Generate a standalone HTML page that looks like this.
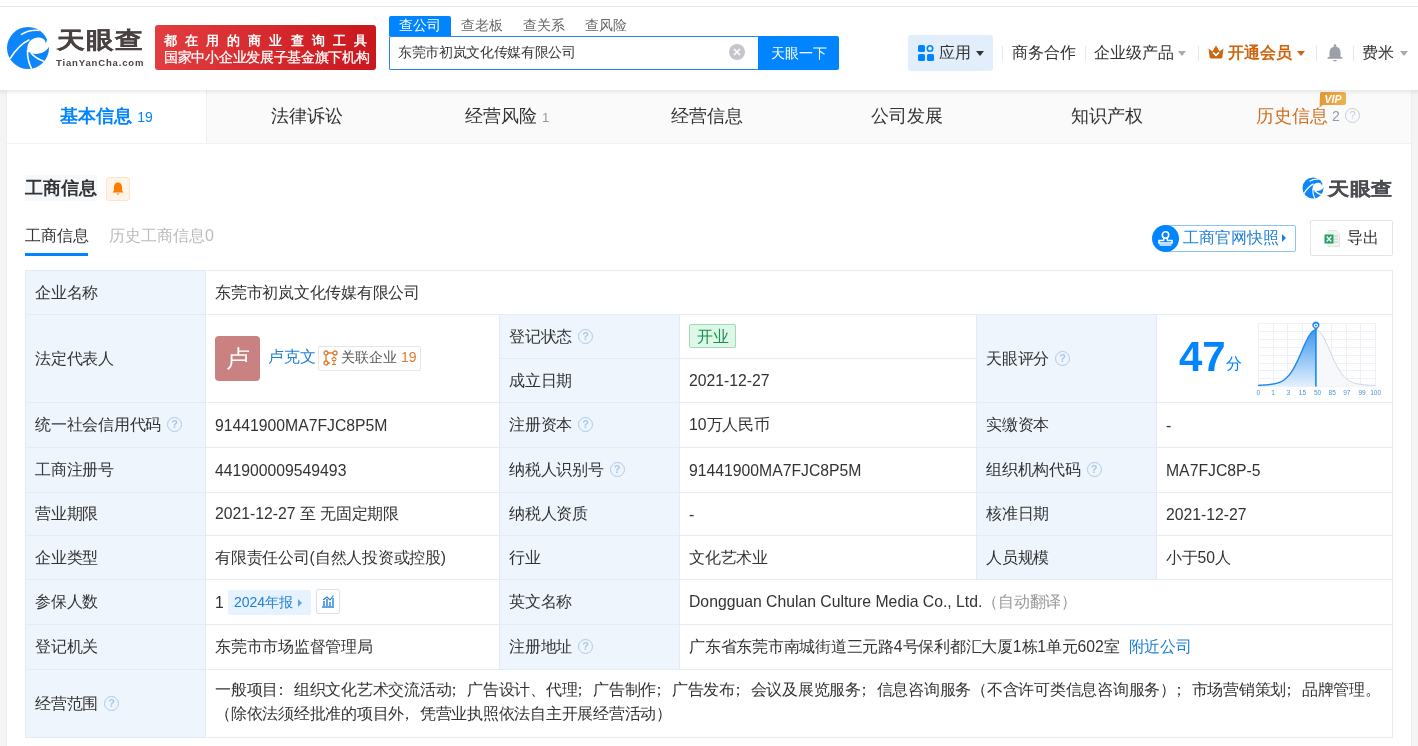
<!DOCTYPE html>
<html><head><meta charset="utf-8">
<style>
*{box-sizing:border-box;margin:0;padding:0}
html,body{width:1418px;height:746px;overflow:hidden}
body{position:relative;background:#f4f4f4;font-family:"Liberation Sans",sans-serif;color:#333}
.a{position:absolute;white-space:nowrap}
#hdr{position:absolute;left:0;top:0;width:1418px;height:90px;background:#fff}
#topline{position:absolute;left:0;top:6px;width:1418px;height:1px;background:#e6e6e6}
#shadow{position:absolute;left:0;top:90px;width:1418px;height:5px;background:linear-gradient(rgba(0,0,0,0.07),rgba(0,0,0,0))}
#tabbar{position:absolute;left:7px;top:90px;width:1404px;height:54px;background:#fafafa;border-bottom:1px solid #f2f2f2}
.tab{position:absolute;top:0;height:53px;width:200px;text-align:center;font-size:18px;line-height:53px;color:#333}
#content{position:absolute;left:7px;top:144px;width:1404px;height:602px;background:#fff}
table.t{position:absolute;left:25px;top:270px;border-collapse:collapse;table-layout:fixed;width:1367px}
table.t td{border:1px solid #e4ebf2;font-size:15.75px;color:#333;padding:1px 0 0 9px;vertical-align:middle;white-space:nowrap}
.c{letter-spacing:-0.25px}
table.t td.l{background:#eef5fd}
.q{display:inline-block;width:15px;height:15px;border:1.6px solid #aecbe8;border-radius:50%;font-size:11px;line-height:12px;text-align:center;color:#a9c8e6;vertical-align:2px;margin-left:6px;font-weight:bold}
.sep{position:absolute;top:46px;width:1px;height:15px;background:#e6e6e6}
.caret{position:absolute;width:0;height:0;border-left:4px solid transparent;border-right:4px solid transparent;border-top:5px solid #999}
</style></head>
<body><div style="position:absolute;left:0;top:0;width:1418px;height:746px;will-change:transform;background:transparent">
<div id="hdr">
  <div id="topline"></div>
  <svg class="a" style="left:4px;top:24px" width="48" height="48" viewBox="0 0 48 48">
    <circle cx="24" cy="24" r="21" fill="#0d85fb"/>
    <path d="M23.8 27.7 C21.9 21.2 25.7 14.2 33.5 13.5 C38.6 13.2 41.8 16.1 41.5 19.3 C42.5 18 43 16.1 43.1 14.5 L48.9 14.5 L48.9 23.2 L45 22.8 C42.5 27.7 36 30.9 28.3 29.6 Z" fill="#fff"/>
    <path d="M17 10.6 C22.5 7.1 29 5.8 35.4 6.4" stroke="#fff" stroke-width="1.5" fill="none"/>
    <path d="M6.1 34.7 C11.6 25.7 18 19.3 25.4 15.8" stroke="#fff" stroke-width="1.6" fill="none"/>
    <path d="M23.5 25.7 C23.2 33.5 25.1 39.9 27.7 45" stroke="#fff" stroke-width="1.6" fill="none"/>
    <path d="M27 29 C30.9 33.5 36 36 39.9 37.3" stroke="#fff" stroke-width="1.6" fill="none"/>
  </svg>
  <div class="a" id="logotxt" style="left:57px;top:26px;font-size:28px;line-height:34px;font-weight:bold;color:#4a4242;letter-spacing:1px;-webkit-text-stroke:0.3px #4a4242;transform:scaleY(0.83);transform-origin:0 0">天眼查</div>
  <div class="a" style="left:56px;top:57px;font-size:9.5px;line-height:12px;font-weight:bold;color:#4a4242;letter-spacing:0.85px">TianYanCha.com</div>
  <div class="a" style="left:155px;top:25px;width:221px;height:45px;border-radius:3px;background:linear-gradient(90deg,#e23d40,#c9171c)"></div>
  <div class="a" style="left:164px;top:32px;font-size:13px;line-height:17px;color:#fff;letter-spacing:8.1px;font-weight:bold">都在用的商业查询工具</div>
  <div class="a" style="left:164px;top:49px;font-size:13.5px;line-height:17px;color:#fff;letter-spacing:-0.3px;-webkit-text-stroke:0.25px #fff">国家中小企业发展子基金旗下机构</div>

  <div class="a" style="left:389px;top:16px;width:62px;height:20px;background:#0084ff;border-radius:2px 2px 0 0"></div>
  <div class="a" style="left:389px;top:15px;width:62px;font-size:14px;line-height:20px;color:#fff;text-align:center">查公司</div>
  <div class="a" style="left:461px;top:15px;font-size:14px;line-height:20px;color:#666">查老板</div>
  <div class="a" style="left:523px;top:15px;font-size:14px;line-height:20px;color:#666">查关系</div>
  <div class="a" style="left:585px;top:15px;font-size:14px;line-height:20px;color:#666">查风险</div>
  <div class="a" style="left:389px;top:36px;width:370px;height:34px;border:1px solid #2b86e3;border-right:none;border-radius:2px 0 0 2px;background:#fff"></div>
  <div class="a" style="left:398px;top:36px;font-size:13.5px;line-height:34px;color:#333;letter-spacing:-0.35px">东莞市初岚文化传媒有限公司</div>
  <div class="a" style="left:729px;top:44px;width:16px;height:16px;border-radius:50%;background:#c4c6cc"></div>
  <svg class="a" style="left:729px;top:44px" width="16" height="16" viewBox="0 0 16 16"><path d="M5 5L11 11M11 5L5 11" stroke="#fff" stroke-width="1.6"/></svg>
  <div class="a" style="left:758px;top:36px;width:81px;height:34px;background:#0084ff;border-radius:0 2px 2px 0;font-size:14px;line-height:34px;color:#fff;text-align:center">天眼一下</div>

  <div class="a" style="left:908px;top:35px;width:85px;height:36px;background:#e2eefb;border-radius:3px"></div>
  <svg class="a" style="left:918px;top:45px" width="16" height="16" viewBox="0 0 16 16"><rect x="0" y="0" width="7" height="7" rx="1.5" fill="#0084ff"/><circle cx="12" cy="3.5" r="2.7" fill="none" stroke="#0084ff" stroke-width="1.6"/><rect x="0" y="9" width="7" height="7" rx="1.5" fill="#0084ff"/><rect x="9" y="9" width="7" height="7" rx="1.5" fill="#0084ff"/></svg>
  <div class="a" style="left:939px;top:43px;font-size:16px;line-height:20px;color:#333">应用</div>
  <div class="caret" style="left:976px;top:51px;border-top-color:#333"></div>
  <div class="sep" style="left:1002px"></div>
  <div class="a" style="left:1012px;top:43px;font-size:16px;line-height:20px;color:#333">商务合作</div>
  <div class="sep" style="left:1085px"></div>
  <div class="a" style="left:1094px;top:43px;font-size:16px;line-height:20px;color:#333">企业级产品</div>
  <div class="caret" style="left:1178px;top:51px;border-top-color:#aaa"></div>
  <div class="sep" style="left:1198px"></div>
  <svg class="a" style="left:1208px;top:45px" width="16" height="14" viewBox="0 0 16 14"><path d="M0.5 3.5 L4.5 6.5 L8 0.5 L11.5 6.5 L15.5 3.5 L14.3 12.5 Q14 13.5 13 13.5 L3 13.5 Q2 13.5 1.7 12.5 Z" fill="#cb6510"/><path d="M5 7.3 L8 10.3 L11 7.3" stroke="#fff" stroke-width="1.8" fill="none"/></svg>
  <div class="a" style="left:1228px;top:43px;font-size:16px;line-height:20px;color:#cc6512;font-weight:bold">开通会员</div>
  <div class="caret" style="left:1297px;top:51px;border-top-color:#cc6512"></div>
  <div class="sep" style="left:1316px"></div>
  <svg class="a" style="left:1327px;top:44px" width="16" height="18" viewBox="0 0 16 18"><circle cx="8" cy="1.6" r="1.3" fill="#9b9fa6"/><path d="M2.5 13.5 L2.5 8.5 C2.5 4.8 5 2.5 8 2.5 C11 2.5 13.5 4.8 13.5 8.5 L13.5 13.5 Z" fill="#9b9fa6"/><rect x="0.5" y="13" width="15" height="1.8" rx="0.9" fill="#9b9fa6"/><rect x="6.3" y="16" width="3.4" height="1.3" rx="0.6" fill="#9b9fa6"/></svg>
  <div class="sep" style="left:1353px"></div>
  <div class="a" style="left:1362px;top:43px;font-size:16px;line-height:20px;color:#333">费米</div>
  <div class="caret" style="left:1400px;top:51px;border-top-color:#aaa"></div>
</div>
<div id="tabbar">
  <div class="tab" style="left:0;width:200px;background:#fff;border-right:1px solid #f0f0f0;color:#0084ff;font-weight:bold">基本信息 <span style="font-size:14px;font-weight:normal">19</span></div>
  <div class="tab" style="left:200px">法律诉讼</div>
  <div class="tab" style="left:400px">经营风险 <span style="font-size:13px;color:#999">1</span></div>
  <div class="tab" style="left:600px">经营信息</div>
  <div class="tab" style="left:800px">公司发展</div>
  <div class="tab" style="left:1000px">知识产权</div>
  
</div>
<div class="a" style="left:1256px;top:106px;font-size:18px;line-height:20px;color:#d06f22">历史信息</div>
<div class="a" style="left:1332px;top:108px;font-size:14px;line-height:16px;color:#8d9bab">2</div>
<div class="a" style="left:1345px;top:108px;width:15px;height:15px;border:1px solid #c3cfda;border-radius:50%;font-size:11px;line-height:13px;text-align:center;color:#c3cfda">?</div>
<svg class="a" style="left:1318px;top:91px" width="29" height="17" viewBox="0 0 29 17"><defs><linearGradient id="vg" x1="0" y1="0" x2="1" y2="0"><stop offset="0" stop-color="#e39a35"/><stop offset="1" stop-color="#eeb04e"/></linearGradient></defs><path d="M3 1 H26 Q28 1 28 3 V12 Q28 14 26 14 H5 L1.5 16.5 L2 4 Q2 1 3 1 Z" fill="url(#vg)"/><text x="15" y="11.5" font-family="Liberation Sans" font-weight="bold" font-style="italic" font-size="10.5" fill="#fff" text-anchor="middle">VIP</text></svg>
<div id="content"></div>
<div class="a" style="left:6px;top:90px;width:1px;height:656px;background:#ededed"></div>
<div class="a" style="left:1411px;top:90px;width:1px;height:656px;background:#ededed"></div>
<div id="shadow"></div>
<div class="a" style="left:25px;top:175px;width:72px;height:26px;background:#f6f9fc"></div>
<div class="a" style="left:25px;top:175px;font-size:18px;line-height:26px;font-weight:bold;color:#333">工商信息</div>
<div class="a" style="left:106px;top:177px;width:24px;height:24px;background:#fff4e8;border:1px solid #fbe3cc;border-radius:3px"></div>
<svg class="a" style="left:111px;top:181px" width="14" height="15" viewBox="0 0 14 15"><path d="M7 1.5 C4 1.5 3 4 3 6.5 L3 9.5 L1.5 11.5 L12.5 11.5 L11 9.5 L11 6.5 C11 4 10 1.5 7 1.5 Z" fill="#ff7a00"/><path d="M5.5 12.5 C6 14 8 14 8.5 12.5 Z" fill="#ff7a00"/></svg>
<div class="a" style="left:25px;top:226px;font-size:16px;line-height:20px;color:#333">工商信息</div>
<div class="a" style="left:25px;top:253px;width:63px;height:3px;background:#0084ff"></div>
<div class="a" style="left:109px;top:226px;font-size:16px;line-height:20px;color:#bbb">历史工商信息0</div>

<svg class="a" style="left:1301px;top:176px" width="24" height="24" viewBox="0 0 48 48">
  <circle cx="24" cy="24" r="21" fill="#0d85fb"/>
  <path d="M23.8 27.7 C21.9 21.2 25.7 14.2 33.5 13.5 C38.6 13.2 41.8 16.1 41.5 19.3 C42.5 18 43 16.1 43.1 14.5 L48.9 14.5 L48.9 23.2 L45 22.8 C42.5 27.7 36 30.9 28.3 29.6 Z" fill="#fff"/>
  <path d="M17 10.6 C22.5 7.1 29 5.8 35.4 6.4" stroke="#fff" stroke-width="2.2" fill="none"/>
  <path d="M6.1 34.7 C11.6 25.7 18 19.3 25.4 15.8" stroke="#fff" stroke-width="2.4" fill="none"/>
  <path d="M23.5 25.7 C23.2 33.5 25.1 39.9 27.7 45" stroke="#fff" stroke-width="2.4" fill="none"/>
  <path d="M27 29 C30.9 33.5 36 36 39.9 37.3" stroke="#fff" stroke-width="2.4" fill="none"/>
</svg>
<div class="a" style="left:1328px;top:176px;font-size:21px;line-height:26px;font-weight:bold;color:#4b4d52;letter-spacing:0.5px;-webkit-text-stroke:0.3px #4b4d52;transform:scaleY(0.85);transform-origin:0 50%">天眼查</div>

<div class="a" style="left:1165px;top:225px;width:131px;height:27px;border:1px solid #8cc4f5;border-radius:2px;background:#fff"></div>
<div class="a" style="left:1152px;top:225px;width:27px;height:27px;border-radius:50%;background:#0084ff"></div>
<svg class="a" style="left:1157px;top:230px" width="17" height="17" viewBox="0 0 17 17"><circle cx="8.5" cy="5" r="3.2" fill="none" stroke="#fff" stroke-width="1.6"/><path d="M7 8 L6.5 10.5 L2 10.5 L2 13 L15 13 L15 10.5 L10.5 10.5 L10 8" fill="none" stroke="#fff" stroke-width="1.6"/><path d="M2.5 15 L14.5 15" stroke="#fff" stroke-width="1.4"/></svg>
<div class="a" style="left:1183px;top:228px;font-size:16px;line-height:20px;color:#1f7fd6">工商官网快照</div>
<div class="a" style="left:1282px;top:234px;width:0;height:0;border-top:4px solid transparent;border-bottom:4px solid transparent;border-left:4px solid #1f7fd6"></div>

<div class="a" style="left:1310px;top:220px;width:83px;height:36px;border:1px solid #e4e4e4;border-radius:2px;background:#fff"></div>
<svg class="a" style="left:1324px;top:230px" width="16" height="17" viewBox="0 0 16 17"><path d="M4 0.5 L12 0.5 L15.5 4 L15.5 16.5 L4 16.5 Z" fill="#f2f2f2" stroke="#ddd" stroke-width="0.8"/><path d="M10 6 L14 6 M10 9 L14 9 M10 12 L14 12" stroke="#ccc" stroke-width="1"/><rect x="0.5" y="4.5" width="9" height="9" fill="#21a366"/><path d="M2.7 6.5 L7.3 11.5 M7.3 6.5 L2.7 11.5" stroke="#fff" stroke-width="1.4"/></svg>
<div class="a" style="left:1347px;top:228px;font-size:16px;line-height:20px;color:#333">导出</div>

<table class="t">
<colgroup><col style="width:180px"><col style="width:294px"><col style="width:180px"><col style="width:297px"><col style="width:180px"><col style="width:236px"></colgroup>
<tr style="height:44px"><td class="l"><span class="c">企业名称</span></td><td colspan="5"><span class="c">东莞市初岚文化传媒有限公司</span></td></tr>
<tr style="height:44px"><td class="l" rowspan="2"><span class="c">法定代表人</span></td><td rowspan="2"></td><td class="l"><span class="c">登记状态</span><span class="q">?</span></td><td></td><td class="l" rowspan="2"><span class="c">天眼评分</span><span class="q">?</span></td><td rowspan="2"></td></tr>
<tr style="height:44px"><td class="l"><span class="c">成立日期</span></td><td>2021-12-27</td></tr>
<tr style="height:45px"><td class="l"><span class="c">统一社会信用代码</span><span class="q">?</span></td><td>91441900MA7FJC8P5M</td><td class="l"><span class="c">注册资本</span><span class="q">?</span></td><td>10<span class="c">万人民币</span></td><td class="l"><span class="c">实缴资本</span></td><td>-</td></tr>
<tr style="height:45px"><td class="l"><span class="c">工商注册号</span></td><td>441900009549493</td><td class="l"><span class="c">纳税人识别号</span><span class="q">?</span></td><td>91441900MA7FJC8P5M</td><td class="l"><span class="c">组织机构代码</span><span class="q">?</span></td><td>MA7FJC8P-5</td></tr>
<tr style="height:43px"><td class="l"><span class="c">营业期限</span></td><td>2021-12-27 <span class="c">至</span> <span class="c">无固定期限</span></td><td class="l"><span class="c">纳税人资质</span></td><td>-</td><td class="l"><span class="c">核准日期</span></td><td>2021-12-27</td></tr>
<tr style="height:44px"><td class="l"><span class="c">企业类型</span></td><td><span class="c">有限责任公司</span>(<span class="c">自然人投资或控股</span>)</td><td class="l"><span class="c">行业</span></td><td><span class="c">文化艺术业</span></td><td class="l"><span class="c">人员规模</span></td><td><span class="c">小于</span>50<span class="c">人</span></td></tr>
<tr style="height:45px"><td class="l"><span class="c">参保人数</span></td><td>1</td><td class="l"><span class="c">英文名称</span></td><td colspan="3">Dongguan Chulan Culture Media Co., Ltd.<span style="color:#999"><span class="c">（自动翻译）</span></span></td></tr>
<tr style="height:45px"><td class="l"><span class="c">登记机关</span></td><td><span class="c">东莞市市场监督管理局</span></td><td class="l"><span class="c">注册地址</span><span class="q">?</span></td><td colspan="3"><span class="c">广东省东莞市南城街道三元路</span>4<span class="c">号保利都汇大厦</span>1<span class="c">栋</span>1<span class="c">单元</span>602<span class="c">室</span><span style="color:#1f7fd6;margin-left:9px"><span class="c">附近公司</span></span></td></tr>
<tr style="height:68px"><td class="l"><span class="c">经营范围</span><span class="q">?</span></td><td colspan="5" style="line-height:24.5px;padding-top:0;padding-bottom:3px;letter-spacing:-0.23px"><span class="c">一般项目<span style="position:relative;left:-5px">：</span>组织文化艺术交流活动<span style="position:relative;left:-5px">；</span>广告设计、代理<span style="position:relative;left:-5px">；</span>广告制作<span style="position:relative;left:-5px">；</span>广告发布<span style="position:relative;left:-5px">；</span>会议及展览服务<span style="position:relative;left:-5px">；</span>信息咨询服务（不含许可类信息咨询服务）<span style="position:relative;left:-5px">；</span>市场营销策划<span style="position:relative;left:-5px">；</span>品牌管理。</span><br><span class="c">（除依法须经批准的项目外<span style="position:relative;left:-5px">，</span>凭营业执照依法自主开展经营活动）</span></td></tr>
</table>

<div class="a" style="left:215px;top:336px;width:45px;height:45px;border-radius:4px;background:#c98181;color:#fff;font-size:24px;line-height:45px;text-align:center">卢</div>
<div class="a" style="left:268px;top:347px;font-size:16px;line-height:20px;color:#1f7fd6">卢克文</div>
<div class="a" style="left:318px;top:346px;width:103px;height:25px;border:1px solid #e6e6e6;border-radius:2px;background:#fff"></div>
<svg class="a" style="left:323px;top:350px" width="15" height="16" viewBox="0 0 15 16"><circle cx="3" cy="3" r="2" fill="none" stroke="#e07a2e" stroke-width="1.3"/><circle cx="12" cy="3" r="2" fill="none" stroke="#e07a2e" stroke-width="1.3"/><circle cx="3" cy="13" r="2" fill="none" stroke="#e07a2e" stroke-width="1.3"/><path d="M5 3 L10 3 M3 5 L3 11 M5 13 L7 13" stroke="#e07a2e" stroke-width="1.3"/><path d="M8.5 9.5 L11 7 L13.5 9.5 M9 10.5 L13 10.5 M11 10.5 L11 14.5 M9 14.5 L13 14.5" stroke="#e07a2e" stroke-width="1.1" fill="none"/></svg>
<div class="a" style="left:341px;top:347px;font-size:14px;line-height:20px;color:#555">关联企业 <span style="color:#e07a2e">19</span></div>

<div class="a" style="left:689px;top:324px;width:47px;height:24px;border:1px solid #a6d8b6;border-radius:2px;background:#ddf8e9;color:#1b8f4c;font-size:16px;line-height:24px;text-align:center">开业</div>

<div class="a" style="left:1179px;top:334px;font-size:42px;line-height:46px;font-weight:bold;color:#0084ff">47</div>
<div class="a" style="left:1226px;top:354px;font-size:16px;line-height:20px;color:#0084ff">分</div>
<svg class="a" style="left:1254px;top:318px" width="128" height="80" viewBox="0 0 128 80">
  <g stroke="#edf1f7" stroke-width="1" fill="none"><path d="M4.5 5.5 H122M4.5 13.5 H122M4.5 21.5 H122M4.5 29.5 H122M4.5 37.5 H122M4.5 45.5 H122M4.5 52.5 H122M4.5 60.5 H122M4.5 68.5 H122"/><path d="M4.5 5 V68.5M19.5 5 V68.5M33.5 5 V68.5M48.5 5 V68.5M62.5 5 V68.5M77.5 5 V68.5M92.5 5 V68.5M106.5 5 V68.5M121.5 5 V68.5"/></g>
  <defs><linearGradient id="gf" x1="0" y1="0" x2="0" y2="1"><stop offset="0" stop-color="#3c98f2"/><stop offset="1" stop-color="#e4f0fc"/></linearGradient></defs>
  <polygon points="4.0,67.38 4.5,67.36 5.0,67.33 5.5,67.31 6.0,67.28 6.5,67.25 7.0,67.22 7.5,67.19 8.0,67.16 8.5,67.13 9.0,67.10 9.5,67.07 10.0,67.03 10.5,67.00 11.0,66.96 11.5,66.92 12.0,66.88 12.5,66.84 13.0,66.79 13.5,66.75 14.0,66.70 14.5,66.65 15.0,66.60 15.5,66.54 16.0,66.49 16.5,66.42 17.0,66.36 17.5,66.29 18.0,66.22 18.5,66.14 19.0,66.06 19.5,65.97 20.0,65.88 20.5,65.78 21.0,65.67 21.5,65.56 22.0,65.43 22.5,65.31 23.0,65.17 23.5,65.02 24.0,64.86 24.5,64.69 25.0,64.51 25.5,64.32 26.0,64.11 26.5,63.89 27.0,63.65 27.5,63.40 28.0,63.13 28.5,62.85 29.0,62.55 29.5,62.22 30.0,61.88 30.5,61.52 31.0,61.13 31.5,60.73 32.0,60.30 32.5,59.84 33.0,59.36 33.5,58.86 34.0,58.33 34.5,57.77 35.0,57.18 35.5,56.57 36.0,55.92 36.5,55.25 37.0,54.55 37.5,53.82 38.0,53.06 38.5,52.27 39.0,51.45 39.5,50.60 40.0,49.72 40.5,48.82 41.0,47.89 41.5,46.93 42.0,45.94 42.5,44.93 43.0,43.90 43.5,42.85 44.0,41.77 44.5,40.68 45.0,39.57 45.5,38.45 46.0,37.32 46.5,36.17 47.0,35.02 47.5,33.87 48.0,32.71 48.5,31.55 49.0,30.40 49.5,29.26 50.0,28.12 50.5,27.00 51.0,25.90 51.5,24.82 52.0,23.76 52.5,22.73 53.0,21.72 53.5,20.75 54.0,19.82 54.5,18.93 55.0,18.07 55.5,17.27 56.0,16.51 56.5,15.81 57.0,15.15 57.5,14.56 58.0,14.02 58.5,13.54 59.0,13.13 59.5,12.77 60.0,12.49 60.5,12.26 61.0,12.11 61.5,12.02 61.9,12.00 61.9,68.4 4,68.4" fill="url(#gf)"/>
  <polygon points="61.9,12.00 62.0,12.00 62.5,12.05 63.0,12.16 63.5,12.35 64.0,12.59 64.5,12.91 65.0,13.29 65.5,13.73 66.0,14.23 66.5,14.79 67.0,15.41 67.5,16.08 68.0,16.81 68.5,17.59 69.0,18.41 69.5,19.28 70.0,20.19 70.5,21.14 71.0,22.12 71.5,23.13 72.0,24.18 72.5,25.25 73.0,26.34 73.5,27.45 74.0,28.58 74.5,29.72 75.0,30.86 75.5,32.02 76.0,33.17 76.5,34.33 77.0,35.48 77.5,36.63 78.0,37.77 78.5,38.90 79.0,40.02 79.5,41.12 80.0,42.21 80.5,43.27 81.0,44.32 81.5,45.34 82.0,46.34 82.5,47.31 83.0,48.26 83.5,49.18 84.0,50.08 84.5,50.94 85.0,51.78 85.5,52.59 86.0,53.36 86.5,54.11 87.0,54.83 87.5,55.52 88.0,56.18 88.5,56.82 89.0,57.42 89.5,57.99 90.0,58.54 90.5,59.06 91.0,59.56 91.5,60.03 92.0,60.47 92.5,60.89 93.0,61.29 93.5,61.67 94.0,62.02 94.5,62.36 95.0,62.67 95.5,62.97 96.0,63.24 96.5,63.50 97.0,63.75 97.5,63.98 98.0,64.19 98.5,64.39 99.0,64.58 99.5,64.76 100.0,64.92 100.5,65.08 101.0,65.22 101.5,65.36 102.0,65.48 102.5,65.60 103.0,65.71 103.5,65.82 104.0,65.91 104.5,66.01 105.0,66.09 105.5,66.17 106.0,66.25 106.5,66.32 107.0,66.39 107.5,66.45 108.0,66.51 108.5,66.57 109.0,66.62 109.5,66.67 110.0,66.72 110.5,66.77 111.0,66.81 111.5,66.85 112.0,66.90 112.5,66.94 113.0,66.97 113.5,67.01 114.0,67.04 114.5,67.08 115.0,67.11 115.5,67.14 116.0,67.17 116.5,67.20 117.0,67.23 117.5,67.26 118.0,67.29 118.5,67.32 119.0,67.34 119.5,67.37 120.0,67.40 120.5,67.42 121.0,67.44 121.5,67.47 122,68.4 61.9,68.4" fill="#f6f8fb"/>
  <polyline points="4.0,67.38 4.5,67.36 5.0,67.33 5.5,67.31 6.0,67.28 6.5,67.25 7.0,67.22 7.5,67.19 8.0,67.16 8.5,67.13 9.0,67.10 9.5,67.07 10.0,67.03 10.5,67.00 11.0,66.96 11.5,66.92 12.0,66.88 12.5,66.84 13.0,66.79 13.5,66.75 14.0,66.70 14.5,66.65 15.0,66.60 15.5,66.54 16.0,66.49 16.5,66.42 17.0,66.36 17.5,66.29 18.0,66.22 18.5,66.14 19.0,66.06 19.5,65.97 20.0,65.88 20.5,65.78 21.0,65.67 21.5,65.56 22.0,65.43 22.5,65.31 23.0,65.17 23.5,65.02 24.0,64.86 24.5,64.69 25.0,64.51 25.5,64.32 26.0,64.11 26.5,63.89 27.0,63.65 27.5,63.40 28.0,63.13 28.5,62.85 29.0,62.55 29.5,62.22 30.0,61.88 30.5,61.52 31.0,61.13 31.5,60.73 32.0,60.30 32.5,59.84 33.0,59.36 33.5,58.86 34.0,58.33 34.5,57.77 35.0,57.18 35.5,56.57 36.0,55.92 36.5,55.25 37.0,54.55 37.5,53.82 38.0,53.06 38.5,52.27 39.0,51.45 39.5,50.60 40.0,49.72 40.5,48.82 41.0,47.89 41.5,46.93 42.0,45.94 42.5,44.93 43.0,43.90 43.5,42.85 44.0,41.77 44.5,40.68 45.0,39.57 45.5,38.45 46.0,37.32 46.5,36.17 47.0,35.02 47.5,33.87 48.0,32.71 48.5,31.55 49.0,30.40 49.5,29.26 50.0,28.12 50.5,27.00 51.0,25.90 51.5,24.82 52.0,23.76 52.5,22.73 53.0,21.72 53.5,20.75 54.0,19.82 54.5,18.93 55.0,18.07 55.5,17.27 56.0,16.51 56.5,15.81 57.0,15.15 57.5,14.56 58.0,14.02 58.5,13.54 59.0,13.13 59.5,12.77 60.0,12.49 60.5,12.26 61.0,12.11 61.5,12.02 61.9,12.00" fill="none" stroke="#1f86ec" stroke-width="1.4"/>
  <polyline points="61.9,12.00 62.0,12.00 62.5,12.05 63.0,12.16 63.5,12.35 64.0,12.59 64.5,12.91 65.0,13.29 65.5,13.73 66.0,14.23 66.5,14.79 67.0,15.41 67.5,16.08 68.0,16.81 68.5,17.59 69.0,18.41 69.5,19.28 70.0,20.19 70.5,21.14 71.0,22.12 71.5,23.13 72.0,24.18 72.5,25.25 73.0,26.34 73.5,27.45 74.0,28.58 74.5,29.72 75.0,30.86 75.5,32.02 76.0,33.17 76.5,34.33 77.0,35.48 77.5,36.63 78.0,37.77 78.5,38.90 79.0,40.02 79.5,41.12 80.0,42.21 80.5,43.27 81.0,44.32 81.5,45.34 82.0,46.34 82.5,47.31 83.0,48.26 83.5,49.18 84.0,50.08 84.5,50.94 85.0,51.78 85.5,52.59 86.0,53.36 86.5,54.11 87.0,54.83 87.5,55.52 88.0,56.18 88.5,56.82 89.0,57.42 89.5,57.99 90.0,58.54 90.5,59.06 91.0,59.56 91.5,60.03 92.0,60.47 92.5,60.89 93.0,61.29 93.5,61.67 94.0,62.02 94.5,62.36 95.0,62.67 95.5,62.97 96.0,63.24 96.5,63.50 97.0,63.75 97.5,63.98 98.0,64.19 98.5,64.39 99.0,64.58 99.5,64.76 100.0,64.92 100.5,65.08 101.0,65.22 101.5,65.36 102.0,65.48 102.5,65.60 103.0,65.71 103.5,65.82 104.0,65.91 104.5,66.01 105.0,66.09 105.5,66.17 106.0,66.25 106.5,66.32 107.0,66.39 107.5,66.45 108.0,66.51 108.5,66.57 109.0,66.62 109.5,66.67 110.0,66.72 110.5,66.77 111.0,66.81 111.5,66.85 112.0,66.90 112.5,66.94 113.0,66.97 113.5,67.01 114.0,67.04 114.5,67.08 115.0,67.11 115.5,67.14 116.0,67.17 116.5,67.20 117.0,67.23 117.5,67.26 118.0,67.29 118.5,67.32 119.0,67.34 119.5,67.37 120.0,67.40 120.5,67.42 121.0,67.44 121.5,67.47" fill="none" stroke="#c9d3de" stroke-width="1"/>
  <path d="M61.9 10 V68.4" stroke="#1f86ec" stroke-width="1.6"/>
  <path d="M58.6 8.5 A3.6 3.6 0 1 1 65.2 8.5 L61.9 12.5 Z" fill="#1f86ec"/>
  <circle cx="61.9" cy="7.5" r="2.1" fill="#fff"/><circle cx="61.9" cy="7.5" r="0.9" fill="#1f86ec"/>
  <g font-family="Liberation Sans" font-size="6.5" fill="#4a90d9" text-anchor="middle"><text x="4.4" y="77">0</text><text x="19.1" y="77">1</text><text x="34.3" y="77">3</text><text x="48.4" y="77">15</text><text x="63.6" y="77">50</text><text x="78.2" y="77">85</text><text x="92.8" y="77">97</text><text x="108" y="77">99</text><text x="121.6" y="77">100</text></g>
</svg>

<div class="a" style="left:228px;top:590px;width:83px;height:25px;border-radius:2px;background:#e6f2fe"></div>
<div class="a" style="left:234px;top:592px;font-size:14px;line-height:20px;color:#1f7fd6">2024年报</div>
<div class="a" style="left:298px;top:599px;width:0;height:0;border-top:4px solid transparent;border-bottom:4px solid transparent;border-left:4px solid #5aa6ee"></div>
<div class="a" style="left:316px;top:589px;width:24px;height:25px;border:1px solid #e0e0e0;border-radius:2px;background:#fff"></div>
<svg class="a" style="left:321px;top:594px" width="14" height="14" viewBox="0 0 14 14"><path d="M1 13 H13" stroke="#1f7fd6" stroke-width="1.4"/><path d="M3 12 V7 M6 12 V5 M9 12 V8 M12 12 V4" stroke="#1f7fd6" stroke-width="1.4"/><path d="M2 6 L6 3 L9 6 L12.5 1.5" stroke="#1f7fd6" stroke-width="1.1" fill="none"/></svg>
</div></body></html>
